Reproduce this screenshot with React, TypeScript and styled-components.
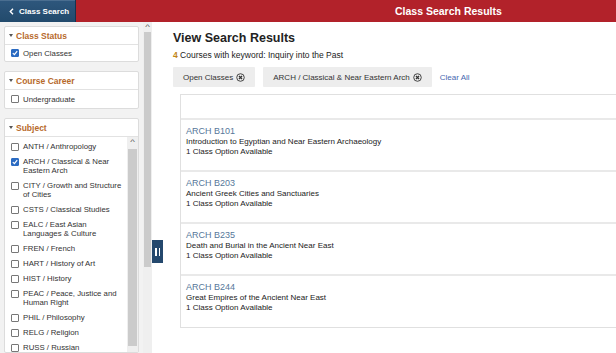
import styled, { createGlobalStyle } from 'styled-components';

const GlobalStyle = createGlobalStyle`
  html, body {
    margin: 0;
    padding: 0;
    background: #ffffff;
    font-family: "Liberation Sans", Arial, sans-serif;
  }
`;

const Page = styled.div`
  width: 616px;
  height: 353px;
  display: flex;
  flex-direction: column;
  overflow: hidden;
`;

const TopBar = styled.div`
  height: 22px;
  flex: none;
  display: flex;
  align-items: stretch;
  background: #b2222a;
`;

const BackButton = styled.button`
  width: 76px;
  border: none;
  border-right: 1px solid #16334f;
  background: linear-gradient(#2e577d, #224a6c);
  color: #fff;
  font: bold 8px "Liberation Sans", Arial, sans-serif;
  display: flex;
  align-items: center;
  gap: 5px;
  padding: 0 0 0 9px;
  box-shadow: inset 0 1px 0 #4a6e90;
`;

const BarTitle = styled.div`
  margin-left: 319px;
  display: flex;
  align-items: center;
  color: #fff;
  font-size: 10.5px;
  font-weight: bold;
`;

const Body = styled.div`
  flex: 1;
  display: flex;
  min-height: 0;
`;

const Sidebar = styled.div`
  width: 152px;
  flex: none;
  display: flex;
  background: #f2f2f2;
`;

const SidebarContent = styled.div`
  width: 143px;
  padding: 4px 4px 0 4px;
  box-sizing: border-box;
  display: flex;
  flex-direction: column;
  gap: 9px;
`;

const Scrollbar = styled.div<{ $w: number; $thumbTop: number; $thumbEnd: number }>`
  width: ${(p) => p.$w}px;
  flex: none;
  position: relative;
  background: #efefef;
  display: flex;
  flex-direction: column;
  align-items: center;
  font-size: 7px;
  color: #555;

  &::after {
    content: '';
    position: absolute;
    left: 1px;
    right: 1px;
    top: ${(p) => p.$thumbTop}px;
    bottom: ${(p) => p.$thumbEnd}px;
    background: #cbcbcb;
  }
`;

const Arrow = styled.span`
  line-height: 8px;
  margin-top: 1px;
  transform: scaleX(1.4);
`;

const Panel = styled.div<{ $grow?: boolean }>`
  background: #fff;
  border: 1px solid #dcdcdc;
  border-radius: 2px;
  flex: ${(p) => (p.$grow ? '1' : 'none')};
  display: flex;
  flex-direction: column;
  min-height: 0;
`;

const PanelHeader = styled.div`
  height: 17px;
  display: flex;
  align-items: center;
  gap: 3px;
  padding-left: 4px;
  border-bottom: 1px solid #e2e2e2;
  color: #b76a2c;
  font-size: 8.5px;
  font-weight: bold;
`;

const Caret = styled.span`
  width: 0;
  height: 0;
  border-left: 2.5px solid transparent;
  border-right: 2.5px solid transparent;
  border-top: 3px solid #555;
`;

const Option = styled.label<{ $pad?: number }>`
  display: flex;
  align-items: flex-start;
  gap: 4px;
  padding: ${(p) => p.$pad ?? 3}px 0 ${(p) => p.$pad ?? 3}px 6px;
  font-size: 7.8px;
  line-height: 9px;
  color: #333;
`;

const Box = styled.span<{ $on?: boolean }>`
  width: 8px;
  height: 8px;
  box-sizing: border-box;
  margin-top: 0.5px;
  flex: none;
  border: 1px solid ${(p) => (p.$on ? '#2b6bc2' : '#777')};
  border-radius: 1px;
  background: ${(p) => (p.$on ? '#2b6bc2' : '#fff')};
  display: flex;
  align-items: center;
  justify-content: center;
`;

const SubjectBody = styled.div`
  flex: 1;
  display: flex;
  min-height: 0;
  overflow: hidden;
`;

const SubjectList = styled.div`
  flex: 1;
  padding-top: 2px;
`;

const Main = styled.div`
  flex: 1;
  position: relative;
  padding: 8px 0 0 21px;
  min-width: 0;
`;

const Handle = styled.div`
  position: absolute;
  left: 0;
  top: 218px;
  width: 11px;
  height: 23px;
  background: #24486d;
  display: flex;
  align-items: center;
  justify-content: center;
  gap: 2px;

  &::before, &::after {
    content: '';
    width: 1.5px;
    height: 8px;
    background: #fff;
  }
`;

const Heading = styled.h2`
  margin: 0;
  font-size: 12.5px;
  line-height: 16px;
  color: #222;
`;

const Summary = styled.div`
  margin-top: 4px;
  font-size: 8.5px;
  color: #222;

  b {
    color: #c08418;
  }
`;

const ChipRow = styled.div`
  margin-top: 7px;
  display: flex;
  align-items: center;
  gap: 8px;
`;

const Chip = styled.div`
  height: 20px;
  padding: 0 10px 0 10px;
  background: #ededed;
  border-radius: 1px;
  display: flex;
  align-items: center;
  gap: 3px;
  font-size: 8px;
  color: #333;
`;

const ClearAll = styled.a`
  font-size: 8px;
  color: #4667b0;
`;

const Results = styled.div`
  margin: 7px 0 0 7px;
  border: 1px solid #e0e0e0;
  border-right: none;
`;

const ResultsTop = styled.div`
  height: 23px;
  border-bottom: 2px solid #e9e9e9;
`;

const Course = styled.div`
  height: 52px;
  padding: 5px 0 0 5px;
  box-sizing: border-box;
  border-bottom: 2px solid #e9e9e9;

  &:last-child {
    border-bottom: none;
    height: 51px;
  }
`;

const Code = styled.div`
  font-size: 9px;
  line-height: 12px;
  color: #56779a;
`;

const Line = styled.div`
  font-size: 8px;
  line-height: 9.5px;
  color: #222;
`;

const subjects: Array<{ label: string; on?: boolean }> = [
  { label: 'ANTH / Anthropology' },
  { label: 'ARCH / Classical & Near Eastern Arch', on: true },
  { label: 'CITY / Growth and Structure of Cities' },
  { label: 'CSTS / Classical Studies' },
  { label: 'EALC / East Asian Languages & Culture' },
  { label: 'FREN / French' },
  { label: 'HART / History of Art' },
  { label: 'HIST / History' },
  { label: 'PEAC / Peace, Justice and Human Right' },
  { label: 'PHIL / Philosophy' },
  { label: 'RELG / Religion' },
  { label: 'RUSS / Russian' },
];

const courses = [
  { code: 'ARCH B101', title: 'Introduction to Egyptian and Near Eastern Archaeology' },
  { code: 'ARCH B203', title: 'Ancient Greek Cities and Sanctuaries' },
  { code: 'ARCH B235', title: 'Death and Burial in the Ancient Near East' },
  { code: 'ARCH B244', title: 'Great Empires of the Ancient Near East' },
];

function Check({ on }: { on?: boolean }) {
  return (
    <Box $on={on}>
      {on && (
        <svg width="6" height="6" viewBox="0 0 6 6">
          <path d="M0.8 3.1 L2.4 4.6 L5.2 1.2" stroke="#fff" strokeWidth="1.2" fill="none" />
        </svg>
      )}
    </Box>
  );
}

function RemoveIcon() {
  return (
    <svg width="9" height="9" viewBox="0 0 10 10">
      <circle cx="5" cy="5" r="4.2" stroke="#333" strokeWidth="1" fill="none" />
      <path d="M3.3 3.3 L6.7 6.7 M6.7 3.3 L3.3 6.7" stroke="#333" strokeWidth="1.4" />
    </svg>
  );
}

export default function App() {
  return (
    <Page>
      <GlobalStyle />
      <TopBar>
        <BackButton>
          <svg width="5" height="7" viewBox="0 0 5 7">
            <path d="M4 0.8 L1.3 3.5 L4 6.2" stroke="#fff" strokeWidth="1.4" fill="none" />
          </svg>
          Class Search
        </BackButton>
        <BarTitle>Class Search Results</BarTitle>
      </TopBar>
      <Body>
        <Sidebar>
          <SidebarContent>
            <Panel>
              <PanelHeader>
                <Caret />
                Class Status
              </PanelHeader>
              <Option $pad={3.5}>
                <Check on />
                Open Classes
              </Option>
            </Panel>
            <Panel>
              <PanelHeader>
                <Caret />
                Course Career
              </PanelHeader>
              <Option $pad={4.5}>
                <Check />
                Undergraduate
              </Option>
            </Panel>
            <Panel $grow>
              <PanelHeader>
                <Caret />
                Subject
              </PanelHeader>
              <SubjectBody>
                <SubjectList>
                  {subjects.map((s) => (
                    <Option key={s.label}>
                      <Check on={s.on} />
                      {s.label}
                    </Option>
                  ))}
                </SubjectList>
                <Scrollbar $w={11} $thumbTop={12} $thumbEnd={6}>
                  <Arrow>^</Arrow>
                </Scrollbar>
              </SubjectBody>
            </Panel>
          </SidebarContent>
          <Scrollbar $w={9} $thumbTop={10} $thumbEnd={86}>
            <Arrow>^</Arrow>
          </Scrollbar>
        </Sidebar>
        <Main>
          <Handle />
          <Heading>View Search Results</Heading>
          <Summary>
            <b>4</b> Courses with keyword: Inquiry into the Past
          </Summary>
          <ChipRow>
            <Chip>
              Open Classes <RemoveIcon />
            </Chip>
            <Chip>
              ARCH / Classical &amp; Near Eastern Arch <RemoveIcon />
            </Chip>
            <ClearAll>Clear All</ClearAll>
          </ChipRow>
          <Results>
            <ResultsTop />
            {courses.map((c) => (
              <Course key={c.code}>
                <Code>{c.code}</Code>
                <Line>{c.title}</Line>
                <Line>1 Class Option Available</Line>
              </Course>
            ))}
          </Results>
        </Main>
      </Body>
    </Page>
  );
}
